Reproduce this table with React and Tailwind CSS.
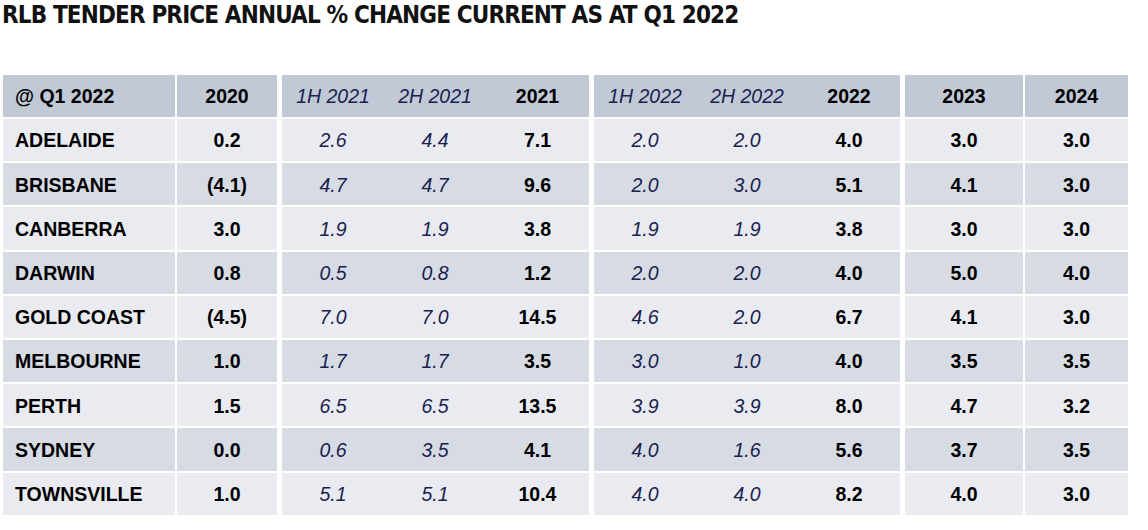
import React from 'react';

const rows = [
  ['ADELAIDE', '0.2', '2.6', '4.4', '7.1', '2.0', '2.0', '4.0', '3.0', '3.0'],
  ['BRISBANE', '(4.1)', '4.7', '4.7', '9.6', '2.0', '3.0', '5.1', '4.1', '3.0'],
  ['CANBERRA', '3.0', '1.9', '1.9', '3.8', '1.9', '1.9', '3.8', '3.0', '3.0'],
  ['DARWIN', '0.8', '0.5', '0.8', '1.2', '2.0', '2.0', '4.0', '5.0', '4.0'],
  ['GOLD COAST', '(4.5)', '7.0', '7.0', '14.5', '4.6', '2.0', '6.7', '4.1', '3.0'],
  ['MELBOURNE', '1.0', '1.7', '1.7', '3.5', '3.0', '1.0', '4.0', '3.5', '3.5'],
  ['PERTH', '1.5', '6.5', '6.5', '13.5', '3.9', '3.9', '8.0', '4.7', '3.2'],
  ['SYDNEY', '0.0', '0.6', '3.5', '4.1', '4.0', '1.6', '5.6', '3.7', '3.5'],
  ['TOWNSVILLE', '1.0', '5.1', '5.1', '10.4', '4.0', '4.0', '8.2', '4.0', '3.0'],
];

const header = ['@ Q1 2022', '2020', '1H 2021', '2H 2021', '2021', '1H 2022', '2H 2022', '2022', '2023', '2024'];

// column widths and the white gap that follows each cell
const cols = [
  { w: 'w-[172px]', gap: 'mr-[2px]' },
  { w: 'w-[100px]', gap: 'mr-[5px]' },
  { w: 'w-[102px]', gap: '' },
  { w: 'w-[102px]', gap: '' },
  { w: 'w-[103px]', gap: 'mr-[5px]' },
  { w: 'w-[102px]', gap: '' },
  { w: 'w-[102px]', gap: '' },
  { w: 'w-[102px]', gap: 'mr-[5px]' },
  { w: 'w-[118px]', gap: 'mr-[2px]' },
  { w: 'w-[103px]', gap: '' },
];

const halfYear = [2, 3, 5, 6];

function Row({ cells, bg, h }) {
  return (
    <div className={`flex ${h}`}>
      {cells.map((c, i) => {
        const italic = halfYear.includes(i);
        return (
          <div
            key={i}
            className={`${cols[i].w} ${cols[i].gap} ${bg} flex items-center pt-[2px] ${i === 0 ? 'justify-start pl-[12px]' : 'justify-center'} ${italic ? 'italic font-normal text-[#18214f]' : 'font-bold text-black'}`}
          >
            {c}
          </div>
        );
      })}
    </div>
  );
}

export default function App() {
  return (
    <div className="w-[1148px] h-[530px] bg-white overflow-hidden">
      <h1
        className="pl-[2px] h-[75px] text-[24px] leading-[30px] font-bold text-[#111] tracking-[-0.85px] font-stretch-condensed"
        style={{ fontFamily: '"DejaVu Sans Condensed", "DejaVu Sans", sans-serif' }}
      >
        RLB TENDER PRICE ANNUAL % CHANGE CURRENT AS AT Q1 2022
      </h1>
      <div
        className="pl-[3px] flex flex-col gap-[2px] text-[19.5px]"
        style={{ fontFamily: '"Liberation Sans", Arial, sans-serif' }}
      >
        <Row cells={header} bg="bg-[#c2c9d6]" h="h-[42px]" />
        {rows.map((r, i) => (
          <Row key={r[0]} cells={r} h="h-[42.2px]" bg={i % 2 === 0 ? 'bg-[#e9ebf0]' : 'bg-[#d6dbe4]'} />
        ))}
      </div>
    </div>
  );
}
